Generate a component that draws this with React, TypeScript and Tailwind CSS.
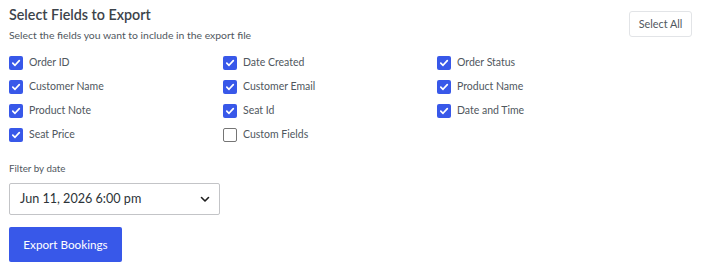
import React from "react";

const fields: { label: string; checked: boolean }[] = [
  { label: "Order ID", checked: true },
  { label: "Date Created", checked: true },
  { label: "Order Status", checked: true },
  { label: "Customer Name", checked: true },
  { label: "Customer Email", checked: true },
  { label: "Product Name", checked: true },
  { label: "Product Note", checked: true },
  { label: "Seat Id", checked: true },
  { label: "Date and Time", checked: true },
  { label: "Seat Price", checked: true },
  { label: "Custom Fields", checked: false },
];

function Box({ checked }: { checked: boolean }) {
  if (checked) {
    return (
      <span className="flex h-[14px] w-[14px] shrink-0 items-center justify-center rounded-[2px] bg-[#3858e9]">
        <svg width="10" height="10" viewBox="0 0 10 10" fill="none">
          <path d="M1.8 5.2 L4 7.3 L8.3 2.6" stroke="white" strokeWidth="1.7" strokeLinecap="round" strokeLinejoin="round" />
        </svg>
      </span>
    );
  }
  return <span className="h-[14px] w-[14px] shrink-0 rounded-[2px] border border-[#757575] bg-white" />;
}

export default function App() {
  return (
    <div className="h-[273px] w-[704px] bg-white text-[#3c434a]" style={{ fontFamily: 'Lato, "Open Sans", sans-serif' }}>
      <div className="px-[9px] pt-[5px]">
        <div className="flex items-start justify-between">
          <div>
            <h2 className="text-[14.3px] font-semibold leading-[20px] text-[#3c434a]">Select Fields to Export</h2>
            <p className="mt-[3px] text-[10.4px] leading-[14px] text-[#50575e]">Select the fields you want to include in the export file</p>
          </div>
          <button className="mr-[3px] mt-[6px] h-[26px] w-[63px] rounded-[3px] border border-[#e2e4e7] bg-white text-[10.8px] text-[#50575e]">
            Select All
          </button>
        </div>
        <div className="mt-[14px] grid grid-cols-[214px_214px_214px] gap-y-[10px]">
          {fields.map((f) => (
            <label key={f.label} className="flex h-[14px] items-center gap-[6px] text-[10.5px] text-[#50575e]">
              <Box checked={f.checked} />
              <span className="whitespace-nowrap">{f.label}</span>
            </label>
          ))}
        </div>
        <div className="mt-[19px] text-[9.8px] leading-[14px] text-[#50575e]">Filter by date</div>
        <div className="mt-[8px] flex h-[32px] w-[211px] items-center justify-between rounded-[2px] border border-[#c3c4c7] bg-white pl-[10px] pr-[8px]">
          <span className="text-[12.6px] text-[#2c3338]">Jun 11, 2026 6:00 pm</span>
          <svg width="12" height="12" viewBox="0 0 12 12" fill="none">
            <path d="M2.5 4.5 L6 8 L9.5 4.5" stroke="#1e1e1e" strokeWidth="1.6" strokeLinecap="round" strokeLinejoin="round" />
          </svg>
        </div>
        <button className="mt-[12px] h-[35px] w-[113px] rounded-[2px] bg-[#3858e9] text-[11.7px] text-white">Export Bookings</button>
      </div>
    </div>
  );
}
